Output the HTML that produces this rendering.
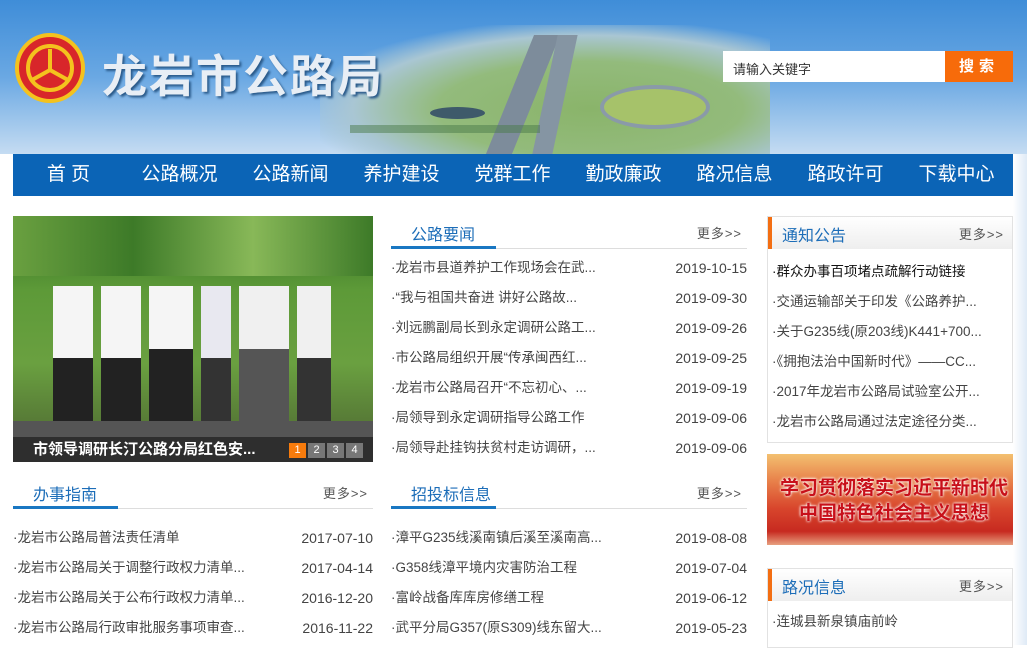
<!DOCTYPE html>
<html><head><meta charset="utf-8"><style>
*{margin:0;padding:0;box-sizing:border-box}
body{width:1027px;height:645px;overflow:hidden;background:#fff;font-family:"Liberation Sans","Noto Sans CJK SC",sans-serif;position:relative}
.hdr{position:absolute;left:0;top:0;width:1027px;height:154px;background:linear-gradient(#3f8dd8,#6aa8e3 50%,#c5dcf2)}
.road{position:absolute;left:320px;top:25px;width:450px;height:129px;background:radial-gradient(ellipse at 60% 65%,#8ab46a 0%,#93bb7c 40%,#a9c6d3 62%,rgba(160,200,230,0) 76%)}
.road i{position:absolute;display:block}
.logo{position:absolute;left:15px;top:33px;width:70px;height:70px;border-radius:50%;background:#d8262a;border:4px solid #f4c21e}
.title{position:absolute;left:102px;top:40px;font-size:45px;font-weight:bold;color:#e8eef5;letter-spacing:2px;text-shadow:2px 2px 2px #2a5a8a;font-family:"Noto Sans CJK SC",sans-serif}
.search{position:absolute;left:723px;top:51px;width:222px;height:31px;background:#fff;font-size:13px;color:#333;padding:8px 10px}
.sbtn{position:absolute;left:945px;top:51px;width:68px;height:31px;background:#f76b0a;color:#fff;font-size:15px;font-weight:bold;text-align:center;line-height:31px;letter-spacing:5px}
.nav{position:absolute;left:13px;top:154px;width:1000px;height:42px;background:#0b64b6;display:flex}
.nav span{width:111px;text-align:center;color:#fff;font-size:19px;line-height:42px}
.side{position:absolute;left:1013px;top:154px;width:14px;height:491px;background:linear-gradient(90deg,#fff,#dfeaf6)}
.photo{position:absolute;left:13px;top:216px;width:360px;height:246px;background:linear-gradient(#2f6a22,#5d9a38 30%,#6aa040 60%,#4a6030);overflow:hidden}
.cap{position:absolute;left:0;bottom:0;width:360px;height:25px;background:rgba(40,40,40,.85);color:#fff;font-weight:bold;font-size:15px;line-height:25px;padding-left:20px}
.pg{position:absolute;top:6px;width:17px;height:15px;background:#777;color:#fff;font-size:11px;text-align:center;line-height:15px;font-weight:normal}
.hd{position:absolute;height:34px;border-bottom:1px solid #ddd}
.hd b{position:absolute;left:0;bottom:-1px;height:3px;background:#1977c2;width:105px}
.hd .t{position:absolute;left:20px;top:6px;font-size:16px;color:#1c6db8}
.hd .m{position:absolute;right:5px;top:8px;font-size:13px;color:#555;letter-spacing:1px}
.list{position:absolute;font-size:13.5px;color:#444}
.list div{height:30px;line-height:30px;position:relative;white-space:nowrap}
.list div span{position:absolute;right:0;font-size:14px;color:#444}
.box{position:absolute;left:767px;border:1px solid #e2e2e2;width:246px}
.bh{height:32px;background:linear-gradient(#fff,#eee);position:relative;border-left:4px solid #f36e12}
.bh .t{position:absolute;left:10px;top:5px;font-size:16px;color:#1c6db8}
.bh .m{position:absolute;right:8px;top:7px;font-size:13px;color:#555;letter-spacing:1px}
.banner{position:absolute;left:767px;top:454px;width:246px;height:91px;background:linear-gradient(#f3c070,#e8804a 30%,#d8452c 60%,#c72a20 85%,#e8a080);color:#c8101a;font-weight:bold;text-align:center;font-size:19px;line-height:25px;padding-top:20px;padding-left:8px;text-shadow:0 0 3px #fff,0 0 2px #fff;font-family:"Noto Sans CJK SC",sans-serif;white-space:nowrap}
</style></head><body>
<div class="hdr"></div>
<div class="road">
<i style="left:190px;top:10px;width:26px;height:119px;background:#7d8c9b;transform:skewX(-22deg)"></i>
<i style="left:225px;top:10px;width:20px;height:119px;background:#8595a3;transform:skewX(-12deg)"></i>
<i style="left:280px;top:60px;width:110px;height:44px;border-radius:50%;background:#a6c26a;border:4px solid #8a9aa8"></i>
<i style="left:110px;top:82px;width:55px;height:12px;border-radius:50%;background:#3e5a6a"></i>
<i style="left:30px;top:100px;width:190px;height:8px;background:#4a7a4a;opacity:.5"></i>
</div>
<div class="logo"><svg width="62" height="62" viewBox="0 0 62 62"><circle cx="31" cy="31" r="22" fill="none" stroke="#f4c21e" stroke-width="4"/><path d="M31 33 L31 12 M31 33 L13 43 M31 33 L49 43" stroke="#f4c21e" stroke-width="4" fill="none"/></svg></div>
<div class="title">龙岩市公路局</div>
<div class="search">请输入关键字</div>
<div class="sbtn">搜索</div>
<div class="nav"><span>首 页</span><span>公路概况</span><span>公路新闻</span><span>养护建设</span><span>党群工作</span><span>勤政廉政</span><span>路况信息</span><span>路政许可</span><span>下载中心</span></div>
<div class="side"></div>

<div class="photo">
<div style="position:absolute;left:0;top:0;width:360px;height:60px;background:linear-gradient(90deg,#6aa040,#3d7a28,#88b858,#3d7a28)"></div>
<div style="position:absolute;left:40px;top:70px;width:320px;height:150px;display:flex;gap:8px">
<i style="width:40px;background:linear-gradient(#f5f5f5 48%,#222 48%)"></i><i style="width:40px;background:linear-gradient(#f5f5f5 48%,#222 48%)"></i><i style="width:44px;background:linear-gradient(#f5f5f5 42%,#222 42%)"></i><i style="width:30px;background:linear-gradient(#e8e8f0 48%,#333 48%)"></i><i style="width:50px;background:linear-gradient(#f0f0f0 42%,#555 42%)"></i><i style="width:34px;background:linear-gradient(#f0f0f0 48%,#333 48%)"></i>
</div>
<div style="position:absolute;left:0;top:205px;width:360px;height:41px;background:#555"></div>
<div class="cap">市领导调研长汀公路分局红色安...
<span class="pg" style="left:276px;background:#f77b0c">1</span><span class="pg" style="left:295px">2</span><span class="pg" style="left:314px">3</span><span class="pg" style="left:333px">4</span></div>
</div>

<div class="hd" style="left:391px;top:215px;width:356px"><b></b><span class="t">公路要闻</span><span class="m">更多&gt;&gt;</span></div>
<div class="list" style="left:391px;top:253px;width:356px">
<div>·龙岩市县道养护工作现场会在武...<span>2019-10-15</span></div>
<div>·“我与祖国共奋进 讲好公路故...<span>2019-09-30</span></div>
<div>·刘远鹏副局长到永定调研公路工...<span>2019-09-26</span></div>
<div>·市公路局组织开展“传承闽西红...<span>2019-09-25</span></div>
<div>·龙岩市公路局召开“不忘初心、...<span>2019-09-19</span></div>
<div>·局领导到永定调研指导公路工作<span>2019-09-06</span></div>
<div>·局领导赴挂钩扶贫村走访调研，...<span>2019-09-06</span></div>
</div>

<div class="hd" style="left:13px;top:475px;width:360px"><b></b><span class="t">办事指南</span><span class="m">更多&gt;&gt;</span></div>
<div class="list" style="left:13px;top:523px;width:360px">
<div>·龙岩市公路局普法责任清单<span>2017-07-10</span></div>
<div>·龙岩市公路局关于调整行政权力清单...<span>2017-04-14</span></div>
<div>·龙岩市公路局关于公布行政权力清单...<span>2016-12-20</span></div>
<div>·龙岩市公路局行政审批服务事项审查...<span>2016-11-22</span></div>
</div>

<div class="hd" style="left:391px;top:475px;width:356px"><b></b><span class="t">招投标信息</span><span class="m">更多&gt;&gt;</span></div>
<div class="list" style="left:391px;top:523px;width:356px">
<div>·漳平G235线溪南镇后溪至溪南高...<span>2019-08-08</span></div>
<div>·G358线漳平境内灾害防治工程<span>2019-07-04</span></div>
<div>·富岭战备库库房修缮工程<span>2019-06-12</span></div>
<div>·武平分局G357(原S309)线东留大...<span>2019-05-23</span></div>
</div>

<div class="box" style="top:216px;height:227px"><div class="bh"><span class="t">通知公告</span><span class="m">更多&gt;&gt;</span></div>
<div class="list" style="left:4px;top:40px;width:240px">
<div style="color:#111">·群众办事百项堵点疏解行动链接</div>
<div>·交通运输部关于印发《公路养护...</div>
<div>·关于G235线(原203线)K441+700...</div>
<div>·《拥抱法治中国新时代》——CC...</div>
<div>·2017年龙岩市公路局试验室公开...</div>
<div>·龙岩市公路局通过法定途径分类...</div>
</div></div>
<div class="banner">学习贯彻落实习近平新时代<br>中国特色社会主义思想</div>
<div class="box" style="top:568px;height:80px"><div class="bh"><span class="t">路况信息</span><span class="m">更多&gt;&gt;</span></div>
<div class="list" style="left:4px;top:38px;width:240px"><div>·连城县新泉镇庙前岭</div></div></div>
</body></html>
